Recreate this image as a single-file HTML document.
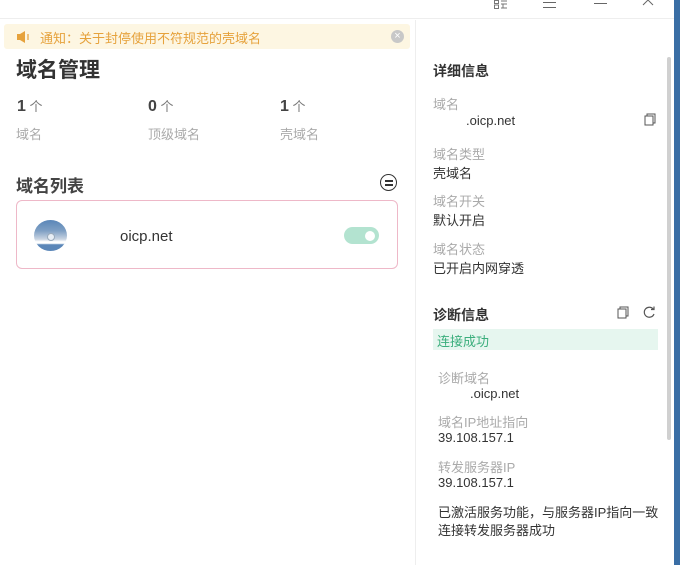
<!DOCTYPE html>
<html><head><meta charset="utf-8"><style>
*{margin:0;padding:0;box-sizing:border-box}
body{width:680px;height:565px;overflow:hidden;background:#fff;font-family:"Liberation Sans","Noto Sans CJK SC",sans-serif;position:relative;color:#333}
.abs{position:absolute}
.lbl{font-size:13px;color:#aaa}
.val{font-size:13px;color:#333}
</style></head><body>
<!-- top bar -->
<div class="abs" style="left:0;top:0;width:674px;height:19px;border-bottom:1px solid #eee"></div>
<svg class="abs" style="left:494px;top:0" width="14" height="9"><rect x="0.5" y="0.5" width="4" height="3" fill="none" stroke="#777"/><rect x="0.5" y="5" width="4" height="3.5" fill="none" stroke="#777"/><path d="M7 1h6M7 4h6M9 4v4M7 8h6" stroke="#777" fill="none"/></svg>
<div class="abs" style="left:543px;top:2px;width:13px;height:1px;background:#666"></div>
<div class="abs" style="left:543px;top:7px;width:13px;height:1px;background:#666"></div>
<div class="abs" style="left:594px;top:3px;width:13px;height:1px;background:#666"></div>
<svg class="abs" style="left:642px;top:0" width="14" height="8"><path d="M1 -5 L11 5 M11 -5 L1 5" stroke="#666" fill="none"/></svg>
<!-- right blue strip -->
<div class="abs" style="left:674px;top:0;width:6px;height:565px;background:#3a6ea5"></div>
<!-- divider -->
<div class="abs" style="left:415px;top:20px;width:1px;height:545px;background:#eee"></div>
<!-- scrollbar -->
<div class="abs" style="left:667px;top:57px;width:4px;height:383px;background:#d0d0d0;border-radius:2px"></div>
<!-- notice -->
<div class="abs" style="left:4px;top:24px;width:406px;height:25px;background:#fdf6e2;border-radius:3px"></div>
<svg class="abs" style="left:16px;top:30px" width="18" height="14"><path d="M1 4h3l5-3v12l-5-3H1z" fill="#e6a23c"/><path d="M12 4v6" stroke="#e6a23c" stroke-width="1.2"/></svg>
<div class="abs" style="left:40px;top:28px;font-size:13px;color:#e6a23c">通知：关于封停使用不符规范的壳域名</div>
<div class="abs" style="left:391px;top:30px;width:13px;height:13px;border-radius:50%;background:#c8c8c8;color:#fff;font-size:11px;line-height:13px;text-align:center">×</div>
<!-- title -->
<div class="abs" style="left:16px;top:54px;font-size:21px;font-weight:bold;color:#333">域名管理</div>
<div class="abs" style="left:17px;top:96px;font-size:16px;font-weight:bold;color:#444">1<span style="font-weight:normal;font-size:13px;color:#777"> 个</span></div>
<div class="abs" style="left:148px;top:96px;font-size:16px;font-weight:bold;color:#444">0<span style="font-weight:normal;font-size:13px;color:#777"> 个</span></div>
<div class="abs" style="left:280px;top:96px;font-size:16px;font-weight:bold;color:#444">1<span style="font-weight:normal;font-size:13px;color:#777"> 个</span></div>
<div class="abs lbl" style="left:16px;top:124px">域名</div>
<div class="abs lbl" style="left:148px;top:124px">顶级域名</div>
<div class="abs lbl" style="left:280px;top:124px">壳域名</div>
<div class="abs" style="left:16px;top:172px;font-size:17px;font-weight:bold;color:#444">域名列表</div>
<div class="abs" style="left:380px;top:174px;width:17px;height:17px;border:1.6px solid #333;border-radius:50%"></div>
<div class="abs" style="left:384.5px;top:180px;width:8px;height:1.6px;background:#333"></div>
<div class="abs" style="left:384.5px;top:184px;width:8px;height:1.6px;background:#333"></div>
<!-- card -->
<div class="abs" style="left:16px;top:200px;width:382px;height:69px;border:1px solid #eeb8c8;border-radius:6px"></div>
<div class="abs" style="left:34px;top:220px;width:33px;height:31px;border-radius:50%;background:linear-gradient(#5a86b8 0%,#7fa0c4 35%,#c9d4e2 62%,#fff 70%,#fff 75%,#5a86b8 80%)"></div>
<div class="abs" style="left:47px;top:233px;width:8px;height:8px;border-radius:50%;background:#e8eef5;border:1px solid #9ab"></div>
<div class="abs" style="left:120px;top:228px;font-size:15px;color:#333">oicp.net</div>
<div class="abs" style="left:344px;top:227px;width:35px;height:17px;border-radius:9px;background:#b3e3d0"></div>
<div class="abs" style="left:365px;top:231px;width:10px;height:10px;border-radius:50%;background:#fff"></div>
<!-- right panel -->
<div class="abs" style="left:433px;top:61px;font-size:14px;font-weight:bold;color:#333">详细信息</div>
<div class="abs lbl" style="left:433px;top:94px">域名</div>
<div class="abs val" style="left:466px;top:113px">.oicp.net</div>
<svg class="abs" style="left:644px;top:113px" width="13" height="13"><rect x="1" y="3" width="8" height="9" fill="none" stroke="#555"/><path d="M3 3V1h8v9H9" fill="none" stroke="#555"/></svg>
<div class="abs lbl" style="left:433px;top:144px">域名类型</div>
<div class="abs val" style="left:433px;top:163px">壳域名</div>
<div class="abs lbl" style="left:433px;top:191px">域名开关</div>
<div class="abs val" style="left:433px;top:210px">默认开启</div>
<div class="abs lbl" style="left:433px;top:239px">域名状态</div>
<div class="abs val" style="left:433px;top:258px">已开启内网穿透</div>
<div class="abs" style="left:433px;top:305px;font-size:14px;font-weight:bold;color:#333">诊断信息</div>
<svg class="abs" style="left:617px;top:306px" width="13" height="13"><rect x="1" y="3" width="8" height="9" fill="none" stroke="#555"/><path d="M3 3V1h8v9H9" fill="none" stroke="#555"/></svg>
<svg class="abs" style="left:642px;top:305px" width="14" height="14"><path d="M11.5 4.5A5 5 0 1 0 12 9" fill="none" stroke="#555" stroke-width="1.2"/><path d="M9 4.5h3v-3" fill="none" stroke="#555" stroke-width="1.2"/></svg>
<div class="abs" style="left:433px;top:329px;width:225px;height:21px;background:#e6f6ef"></div>
<div class="abs" style="left:437px;top:331px;font-size:13px;color:#3aae7c">连接成功</div>
<div class="abs lbl" style="left:438px;top:368px">诊断域名</div>
<div class="abs val" style="left:470px;top:386px">.oicp.net</div>
<div class="abs lbl" style="left:438px;top:412px">域名IP地址指向</div>
<div class="abs val" style="left:438px;top:430px">39.108.157.1</div>
<div class="abs lbl" style="left:438px;top:457px">转发服务器IP</div>
<div class="abs val" style="left:438px;top:475px">39.108.157.1</div>
<div class="abs val" style="left:438px;top:502px">已激活服务功能，与服务器IP指向一致</div>
<div class="abs val" style="left:438px;top:520px">连接转发服务器成功</div>
</body></html>
